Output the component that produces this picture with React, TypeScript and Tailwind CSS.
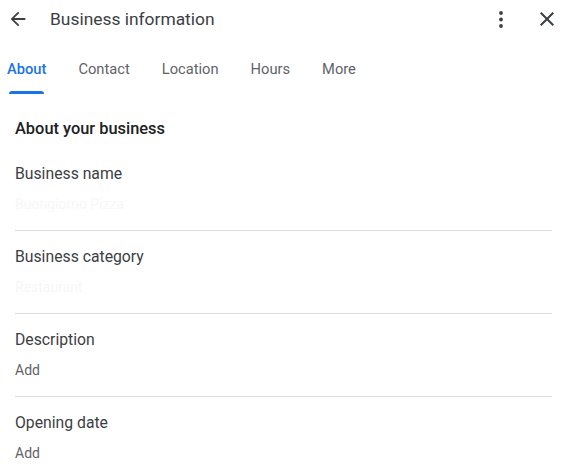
import React, { useState } from 'react';

type Field = {
  label: string;
  value: string;
  placeholder?: boolean;
};

const TABS = ['About', 'Contact', 'Location', 'Hours', 'More'];

const FIELDS: Field[] = [
  { label: 'Business name', value: 'Buongiorno Pizza' },
  { label: 'Business category', value: 'Restaurant' },
  { label: 'Description', value: 'Add', placeholder: true },
  { label: 'Opening date', value: 'Add', placeholder: true },
];

const ArrowBack: React.FC = () => (
  <svg width="22" height="22" viewBox="0 0 24 24" className="fill-[#3c4043]">
    <path d="M20 11H7.83l5.59-5.59L12 4l-8 8 8 8 1.41-1.41L7.83 13H20v-2z" />
  </svg>
);

const MoreVert: React.FC = () => (
  <svg width="24" height="24" viewBox="0 0 24 24" className="fill-[#3c4043]">
    <circle cx="12" cy="6" r="1.9" />
    <circle cx="12" cy="12.5" r="1.9" />
    <circle cx="12" cy="19" r="1.9" />
  </svg>
);

const Close: React.FC = () => (
  <svg width="24" height="24" viewBox="0 0 24 24" className="fill-[#3c4043]">
    <path d="M19 6.41 17.59 5 12 10.59 6.41 5 5 6.41 10.59 12 5 17.59 6.41 19 12 13.41 17.59 19 19 17.59 13.41 12z" />
  </svg>
);

const App: React.FC = () => {
  const [activeTab, setActiveTab] = useState('About');

  return (
    <div className="w-[568px] h-[474px] overflow-hidden bg-white font-['Roboto','Liberation_Sans',sans-serif]">
      {/* top bar */}
      <header className="flex items-center h-[38px]">
        <button className="w-[36px] h-[38px] flex items-center justify-center">
          <ArrowBack />
        </button>
        <h1 className="ml-[14px] text-[17.4px] leading-6 text-[#3c4043]">Business information</h1>
        <div className="ml-auto flex items-center">
          <button className="w-[24px] h-[38px] flex items-center justify-center mr-[22px]">
            <MoreVert />
          </button>
          <button className="w-[24px] h-[38px] flex items-center justify-center mr-[9px]">
            <Close />
          </button>
        </div>
      </header>

      {/* tabs */}
      <nav className="flex gap-8 pl-[7px] pt-[21px]">
        {TABS.map(tab => {
          const active = tab === activeTab;
          return (
            <button key={tab} onClick={() => setActiveTab(tab)} className="flex flex-col">
              <span
                className={`text-[14.7px] leading-5 ${
                  active ? 'text-[#1a73e8] font-medium' : 'text-[#5f6368]'
                }`}
              >
                {tab}
              </span>
              <span
                className={`mt-[12px] mx-[2px] h-[3px] rounded-t-[3px] ${
                  active ? 'bg-[#1a73e8]' : 'bg-transparent'
                }`}
              />
            </button>
          );
        })}
      </nav>

      {/* about section */}
      <section className="pl-[15px] pr-4 mt-[23px]">
        <h2 className="text-[16.4px] leading-6 font-medium text-[#202124] mb-[7px]">About your business</h2>
        {FIELDS.map((field, i) => (
          <div key={field.label} className={`pt-[14px] pb-[16px] ${i > 0 ? 'border-t border-[#dadce0]' : ''}`}>
            <div className="text-[15.75px] leading-6 text-[#3c4043]">{field.label}</div>
            <div
              className={`mt-2 text-[14px] leading-5 ${
                field.placeholder ? 'text-[#5f6368]' : 'text-[#f7f7f7]'
              }`}
            >
              {field.value}
            </div>
          </div>
        ))}
      </section>
    </div>
  );
};

export default App;
